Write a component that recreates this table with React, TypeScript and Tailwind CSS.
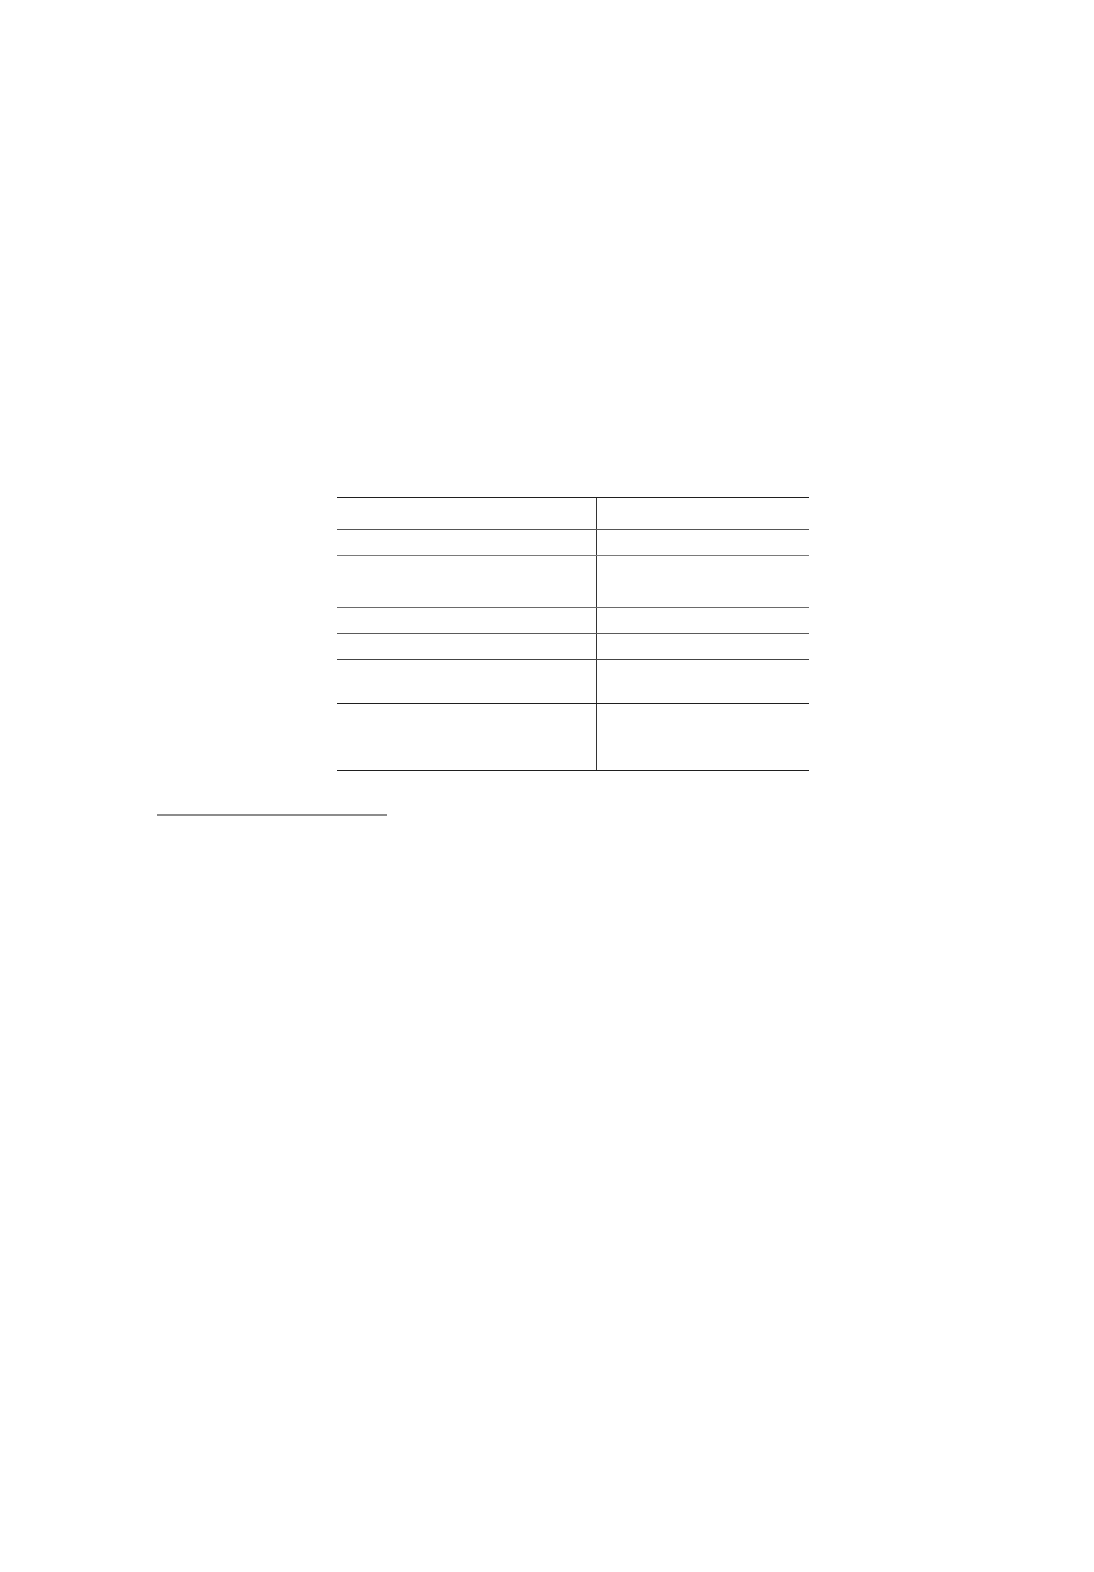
const rows = [
  { h: "h-[31px]", line: "border-t-[1.5px] border-[#1f1f1f]" },
  { h: "h-[25px]", line: "border-t-[1.5px] border-[#555555]" },
  { h: "h-[51px]", line: "border-t-[1.5px] border-[#7a7a7a]" },
  { h: "h-[25px]", line: "border-t-[1.5px] border-[#6a6a6a]" },
  { h: "h-[25px]", line: "border-t-[1.5px] border-[#5a5a5a]" },
  { h: "h-[43px]", line: "border-t-[1.5px] border-[#444444]" },
  { h: "h-[66px]", line: "border-t-[1.5px] border-[#1f1f1f]" },
];

export default function App() {
  return (
    <div className="min-h-[1572px] w-full bg-white font-['Liberation_Serif',serif]">
      <div className="pt-[497px] pl-[337px]">
        <div className="w-[472px] border-b-[1.5px] border-[#1f1f1f]">
          {rows.map((row, i) => (
            <div key={i} className={`flex ${row.line}`}>
              <div className={`w-[260px] ${row.h} border-r-[1.5px] border-[#333333]`} />
              <div className={`flex-1 ${row.h}`} />
            </div>
          ))}
        </div>
      </div>
      <div className="pt-[43px] pl-[157px]">
        <div className="w-[230px] h-[2px] bg-[#8c8c8c]" />
      </div>
    </div>
  );
}
